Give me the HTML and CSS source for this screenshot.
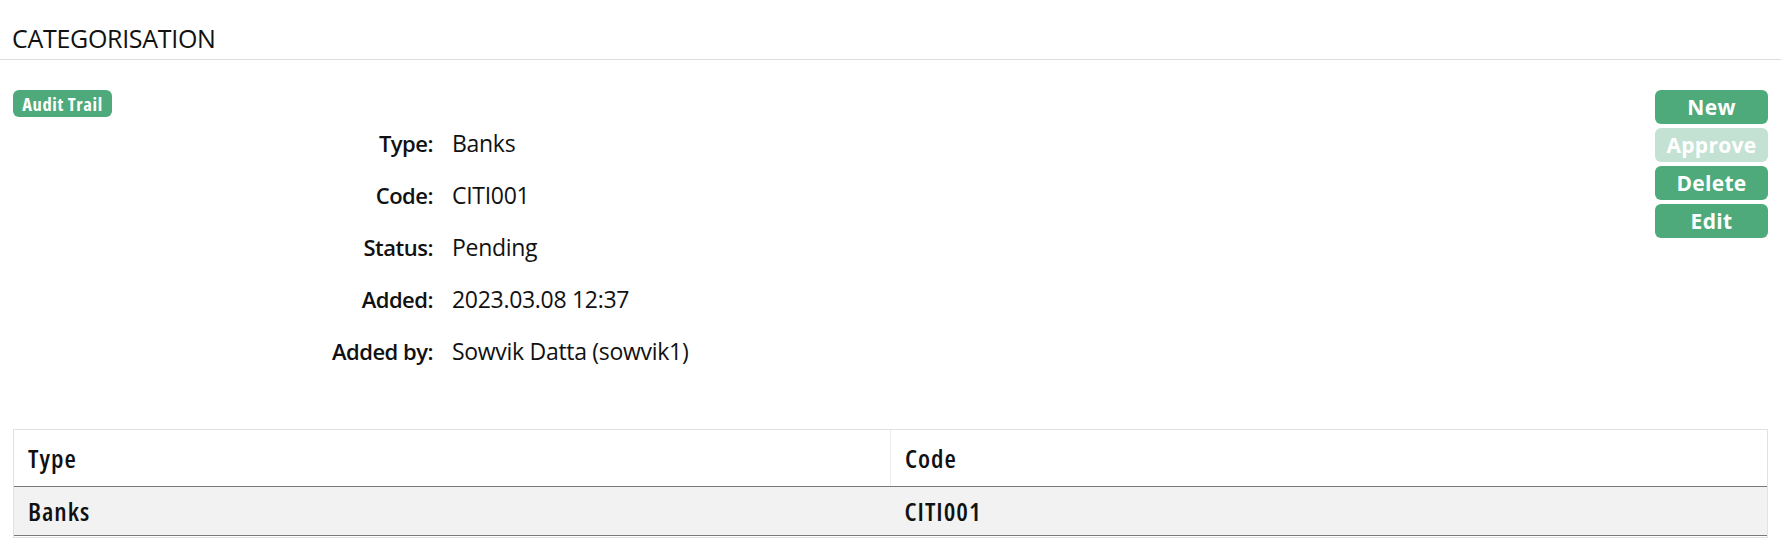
FILE: index.html
```html
<!DOCTYPE html>
<html>
<head>
<meta charset="utf-8">
<link rel="stylesheet" href="styles.css">
</head>
<body>
<header class="page-header">
  <h1 class="title">CATEGORISATION</h1>
</header>
<main class="page">
  <section class="top">
    <div class="info">
      <a class="badge">Audit Trail</a>
      <dl class="details">
        <dt>Type:</dt><dd>Banks</dd>
        <dt>Code:</dt><dd>CITI001</dd>
        <dt>Status:</dt><dd>Pending</dd>
        <dt>Added:</dt><dd>2023.03.08 12:37</dd>
        <dt>Added by:</dt><dd>Sowvik Datta (sowvik1)</dd>
      </dl>
    </div>
    <div class="actions">
      <button class="btn">New</button>
      <button class="btn btn-disabled">Approve</button>
      <button class="btn">Delete</button>
      <button class="btn">Edit</button>
    </div>
  </section>
  <div class="table-wrap">
    <table class="grid">
      <thead>
        <tr><th>Type</th><th>Code</th></tr>
      </thead>
      <tbody>
        <tr><td>Banks</td><td>CITI001</td></tr>
      </tbody>
    </table>
  </div>
</main>
</body>
</html>
```
FILE: styles.css
```css
* { box-sizing: border-box; }
html, body { margin: 0; padding: 0; background: #fff; }
body { font-family: "Open Sans", "Noto Sans", sans-serif; color: #111; }

.page-header {
  padding: 23px 12px 6px;
  border-bottom: 1px solid #dddddd;
}
.title {
  margin: 0;
  font-size: 25px;
  line-height: 30px;
  font-weight: 400;
  letter-spacing: -0.3px;
  color: #111;
}

.page { padding: 0 13px 0 13px; }

.top {
  display: flex;
  justify-content: space-between;
  align-items: flex-start;
  padding-top: 30px;
}
.info { flex: 1; }

.badge {
  display: inline-flex;
  align-items: center;
  justify-content: center;
  width: 99px;
  height: 27px;
  border-radius: 6px;
  background: #4eaa7b;
  color: #fff;
  font-size: 18.5px;
  font-weight: 700;
  font-stretch: 75%;
  letter-spacing: 0.6px;
  vertical-align: top;
}

.details {
  display: grid;
  grid-template-columns: 420px 1fr;
  column-gap: 19px;
  align-items: baseline;
  margin: 0;
}
.details dt {
  text-align: right;
  font-size: 22px;
  font-weight: 600;
  letter-spacing: -0.5px;
  line-height: 52px;
}
.details dd {
  margin: 0;
  font-size: 23px;
  font-weight: 400;
  letter-spacing: -0.3px;
  line-height: 52px;
}

.actions {
  display: flex;
  flex-direction: column;
  gap: 4px;
  width: 113px;
}
.btn {
  height: 34px;
  border: 0;
  border-radius: 6px;
  background: #4eaa7b;
  color: #fff;
  font-family: "Open Sans", sans-serif;
  font-size: 21px;
  font-weight: 700;
  letter-spacing: 0.3px;
  padding: 0;
  line-height: 34px;
}
.btn-disabled { background: #c4e2d3; }

.table-wrap {
  margin-top: 52px;
  border: 1px solid #e2e2e2;
  padding-bottom: 1px;
}
.grid {
  width: 100%;
  border-collapse: collapse;
  table-layout: fixed;
  font-size: 26px;
  font-weight: 600;
  font-stretch: 75%;
  letter-spacing: 1px;
}
.grid th, .grid td {
  text-align: left;
  padding: 0 14px;
}
.grid th {
  height: 56px;
  font-weight: 600;
  border-bottom: 1px solid #7a7a7a;
}
.grid th + th { border-left: 1px solid #eeeeee; }
.grid td {
  height: 49px;
  background: #f2f2f2;
  border-bottom: 1px solid #7a7a7a;
}
```
